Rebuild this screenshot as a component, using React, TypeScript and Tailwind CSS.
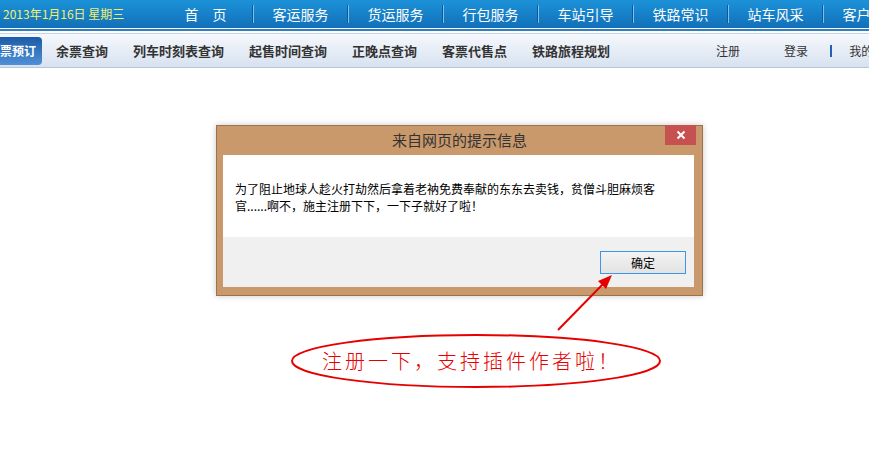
import React from "react";

const topItems = ["首　页", "客运服务", "货运服务", "行包服务", "车站引导", "铁路常识", "站车风采", "客户服务"];
const navItems = ["余票查询", "列车时刻表查询", "起售时间查询", "正晚点查询", "客票代售点", "铁路旅程规划"];

export default function App() {
  return (
    <div className="relative w-[869px] h-[464px] overflow-hidden bg-white font-['Noto_Sans_CJK_SC',sans-serif]">
      {/* top blue bar */}
      <div className="flex items-center h-[28px] bg-gradient-to-b from-[#1c92d8] to-[#1270b9] whitespace-nowrap">
        <div className="w-[159px] shrink-0 pl-[3px] text-[12px] text-[#f4ee6e] leading-none">2013年1月16日 星期三</div>
        {topItems.map((t, i) => (
          <React.Fragment key={t}>
            <div className="w-[93px] shrink-0 text-center text-[14px] text-white leading-none">{t}</div>
            {i < topItems.length - 1 && (
              <div className="flex shrink-0 h-[18px]">
                <div className="w-px bg-[#0b5a98]" />
                <div className="w-px bg-[#7ec0ee]" />
              </div>
            )}
          </React.Fragment>
        ))}
      </div>
      <div className="h-px bg-white" />
      <div className="h-[2px] bg-[#2d80c2]" />
      <div className="h-[2px] bg-white" />

      {/* sub navigation */}
      <div className="flex items-center h-[35px] border-t border-[#c4d6ea] border-b border-b-[#b7c7da] bg-gradient-to-b from-[#f6f8fc] to-[#d7e2f0] whitespace-nowrap">
        <div className="w-[42px] shrink-0 h-[28px] flex items-center rounded-r-[4px] bg-gradient-to-b from-[#1a5ca8] to-[#4f90d6] text-white font-bold text-[12px]">
          票预订
        </div>
        <div className="flex items-center gap-[25px] ml-[14px] text-[13px] font-bold text-[#333]">
          {navItems.map((t) => (
            <span key={t}>{t}</span>
          ))}
        </div>
        <div className="ml-[28px] w-px self-stretch bg-[#a9c6e2]" />
        <div className="w-px self-stretch bg-white" />
        <div className="flex items-center text-[12px] text-[#333]">
          <span className="ml-[78px]">注册</span>
          <span className="ml-[44px]">登录</span>
          <span className="ml-[22px] w-[2px] h-[12px] bg-[#1f62b5]" />
          <span className="ml-[17px]">我的12306</span>
        </div>
      </div>

      {/* dialog */}
      <div className="absolute left-[216px] top-[125px] w-[487px] h-[171px] bg-[#c9996b] border border-[#9b7350] shadow-[0_0_6px_rgba(0,0,0,0.22)] flex flex-col">
        <div className="relative h-[29px] shrink-0 flex items-center justify-center text-[15px] text-[#333]">
          来自网页的提示信息
          <div className="absolute right-[6px] top-[-1px] w-[31px] h-[20px] bg-[#c75050] flex items-center justify-center">
            <svg width="10" height="10" viewBox="0 0 10 10">
              <path d="M1.5 1.5 L8.5 8.5 M8.5 1.5 L1.5 8.5" stroke="white" strokeWidth="2" />
            </svg>
          </div>
        </div>
        <div className="mx-[6px] w-[471px] h-[132px] flex flex-col">
          <div className="h-[82px] bg-white pl-[12px] pt-[25px] text-[12px] leading-[17px] text-black whitespace-nowrap">
            <div>为了阻止地球人趁火打劫然后拿着老衲免费奉献的东东去卖钱，贫僧斗胆麻烦客</div>
            <div>官......啊不，施主注册下下，一下子就好了啦！</div>
          </div>
          <div className="flex-1 bg-[#f0f0f0] flex justify-end items-start pt-[14px] pr-[8px]">
            <div className="w-[86px] h-[23px] border border-[#3c98e6] bg-gradient-to-b from-[#f3f3f3] to-[#e3e3e3] flex items-center justify-center text-[12px] text-black">
              确定
            </div>
          </div>
        </div>
      </div>

      {/* annotation */}
      <svg className="absolute left-0 top-0" width="869" height="464" viewBox="0 0 869 464">
        <ellipse cx="476" cy="361" rx="184" ry="26" fill="none" stroke="#e60000" strokeWidth="2" />
        <line x1="558" y1="330" x2="604" y2="283" stroke="#e60000" strokeWidth="2" />
        <path d="M612 275 L598 281 L606 289 Z" fill="#e60000" />
      </svg>
      <div className="absolute left-[322px] top-[348px] text-[20px] leading-[26px] tracking-[3px] text-[#e60000] whitespace-nowrap font-['Noto_Sans_CJK_SC',serif] font-light">
        注册一下，支持插件作者啦！
      </div>
    </div>
  );
}
